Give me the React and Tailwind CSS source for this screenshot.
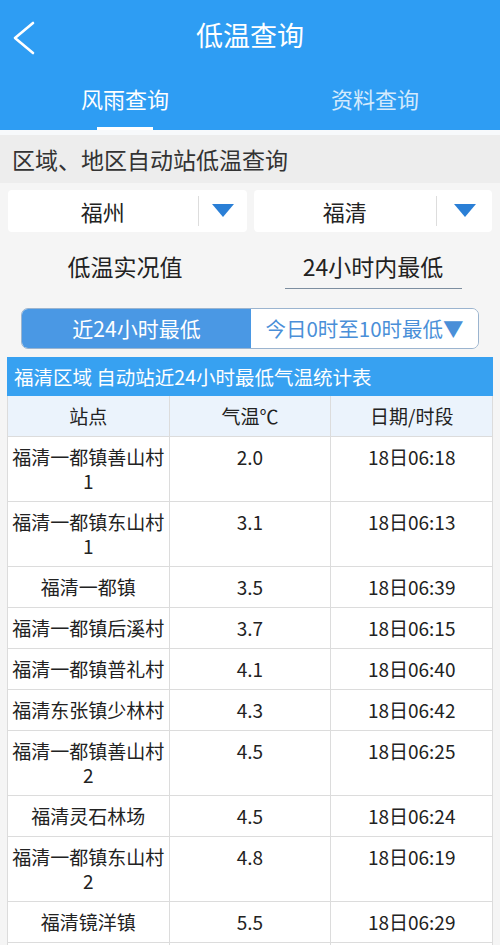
const rows = [
  { name: ['福清一都镇善山村', '1'], temp: '2.0', time: '18日06:18' },
  { name: ['福清一都镇东山村', '1'], temp: '3.1', time: '18日06:13' },
  { name: ['福清一都镇'], temp: '3.5', time: '18日06:39' },
  { name: ['福清一都镇后溪村'], temp: '3.7', time: '18日06:15' },
  { name: ['福清一都镇普礼村'], temp: '4.1', time: '18日06:40' },
  { name: ['福清东张镇少林村'], temp: '4.3', time: '18日06:42' },
  { name: ['福清一都镇善山村', '2'], temp: '4.5', time: '18日06:25' },
  { name: ['福清灵石林场'], temp: '4.5', time: '18日06:24' },
  { name: ['福清一都镇东山村', '2'], temp: '4.8', time: '18日06:19' },
  { name: ['福清镜洋镇'], temp: '5.5', time: '18日06:29' },
];

function Triangle() {
  return (
    <svg width="22" height="14" viewBox="0 0 22 14">
      <path d="M0 0 H22 L11 13 Z" fill="#2a7fd6" />
    </svg>
  );
}

function Dropdown({ label, arrowW }) {
  return (
    <div className="flex-1 h-[42px] bg-white rounded flex items-center">
      <div className="flex-1 text-center text-[22px] text-[#222]">{label}</div>
      <div className="w-px h-[30px] bg-[#ddd]" />
      <div className={`${arrowW} flex justify-center`}>
        <Triangle />
      </div>
    </div>
  );
}

const cell = 'border-r border-b border-[#dcdcdc] py-[8px] text-center leading-[24px]';

export default function App() {
  return (
    <div
      className="w-[500px] h-[945px] overflow-hidden bg-[#f5f5f5]"
      style={{ fontFamily: '"Noto Sans CJK SC", "Noto Sans", sans-serif' }}
    >
      {/* header */}
      <div className="bg-[#2e9df3] h-[130px] text-white">
        <div className="h-[75px] relative flex items-center justify-center pb-[6px]">
          <svg className="absolute left-[10px] top-[21px]" width="26" height="34" viewBox="0 0 26 34">
            <path d="M23 2 L5 17 L23 32" fill="none" stroke="white" strokeWidth="2.6" strokeLinecap="round" strokeLinejoin="round" />
          </svg>
          <div className="text-[27px] leading-none">低温查询</div>
        </div>
        <div className="h-[55px] flex">
          <div className="flex-1 flex flex-col items-center">
            <div className="flex-1 flex items-center pb-[6px] text-[22px]">风雨查询</div>
            <div className="w-[56px] h-[3px] bg-white" />
          </div>
          <div className="flex-1 flex flex-col items-center">
            <div className="flex-1 flex items-center pb-[6px] text-[22px] text-[#d3eafd]">资料查询</div>
            <div className="h-[3px]" />
          </div>
        </div>
      </div>

      <div className="h-[5px] bg-[#f7f9fb]" />
      <div className="h-[48px] bg-[#ededed] flex items-center px-[12px] text-[23px] text-[#333]">
        区域、地区自动站低温查询
      </div>

      <div className="flex gap-[7px] px-[8px] pt-[7px]">
        <Dropdown label="福州" arrowW="w-[48px]" />
        <Dropdown label="福清" arrowW="w-[55px]" />
      </div>

      <div className="flex h-[60px] items-center mt-[4px]">
        <div className="w-[250px] text-center text-[23px] text-[#222]">低温实况值</div>
        <div className="flex-1 flex justify-center">
          <div className="w-[177px] ml-[-4px] text-center text-[23px] text-[#222] border-b-[1.5px] border-[#7d8ea0] pb-[4px] pt-[6px]">
            24小时内最低
          </div>
        </div>
      </div>

      <div className="mx-[21px] mt-[12px] h-[41px] flex rounded-[7px] border border-[#9bb4cf] overflow-hidden">
        <div className="w-[229px] bg-[#4a98e4] text-white text-[21px] flex items-center justify-center">
          近24小时最低
        </div>
        <div className="flex-1 bg-white text-[#4a8fd8] text-[20.5px] flex items-center justify-center">
          今日0时至10时最低▼
        </div>
      </div>

      {/* table */}
      <div className="mx-[7px] mt-[8px] bg-white">
        <div className="h-[39px] bg-[#37a1f1] text-white text-[19.5px] flex items-center px-[7px]">
          福清区域 自动站近24小时最低气温统计表
        </div>
        <div className="grid grid-cols-3 border-l border-[#dcdcdc] text-[19px] text-[#222]">
          {['站点', '气温℃', '日期/时段'].map((h) => (
            <div
              key={h}
              className="h-[41px] bg-[#ebf3fc] border-r border-b border-[#dcdcdc] flex items-center justify-center"
            >
              {h}
            </div>
          ))}
          {rows.map((r, i) => (
            <div key={i} className="contents">
              <div className={cell}>
                {r.name.map((n) => (
                  <div key={n}>{n}</div>
                ))}
              </div>
              <div className={cell}>{r.temp}</div>
              <div className={cell}>{r.time}</div>
            </div>
          ))}
          <div className="h-[41px] border-r border-[#dcdcdc]" />
          <div className="h-[41px] border-r border-[#dcdcdc]" />
          <div className="h-[41px] border-r border-[#dcdcdc]" />
        </div>
      </div>
    </div>
  );
}
